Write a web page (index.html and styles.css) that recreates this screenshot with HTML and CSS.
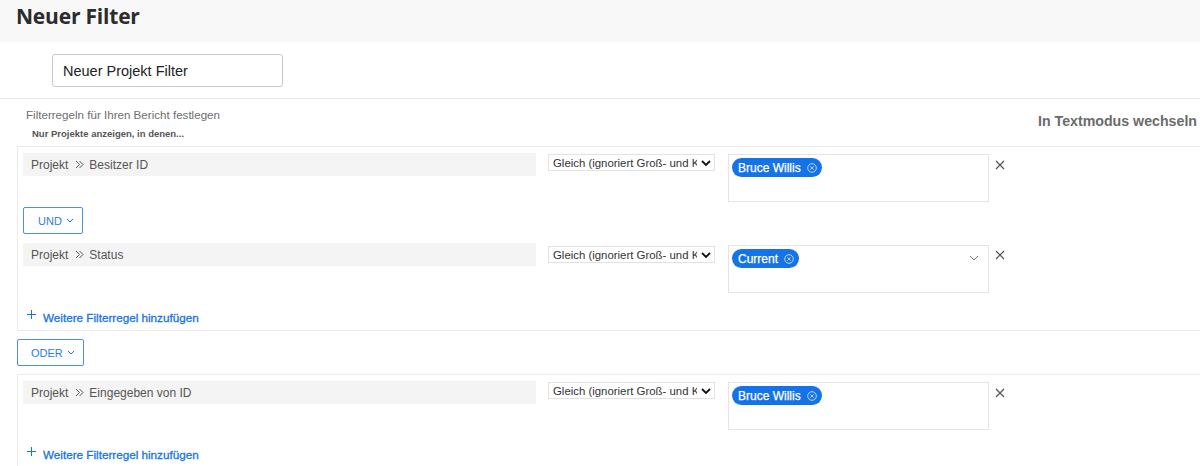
FILE: index.html
```html
<!DOCTYPE html>
<html lang="de">
<head>
<meta charset="utf-8">
<title>Neuer Filter</title>
<link rel="stylesheet" href="styles.css">
</head>
<body>
<header class="page-header">
  <h1 class="title">Neuer Filter</h1>
</header>
<div class="name-row">
  <div class="name-input">Neuer Projekt Filter</div>
</div>
<section class="rules">
  <div class="rules-head">
    <div class="rules-intro">
      <div class="rules-title">Filterregeln für Ihren Bericht festlegen</div>
      <div class="rules-sub">Nur Projekte anzeigen, in denen...</div>
    </div>
    <div class="text-mode">In Textmodus wechseln</div>
  </div>

  <div class="group">
    <div class="rule">
      <div class="field">Projekt<svg class="sep" viewBox="0 0 9 9" width="9" height="9"><path d="M1 1l3.5 3.5L1 8M4.5 1L8 4.5 4.5 8" fill="none" stroke="#555" stroke-width="1"/></svg>Besitzer ID</div>
      <div class="op"><span class="op-text">Gleich (ignoriert Groß- und Kleinschreibung)</span><svg class="op-chev" viewBox="0 0 10 6" width="10" height="6"><path d="M1 1l4 4 4-4" fill="none" stroke="#111" stroke-width="1.8"/></svg></div>
      <div class="value"><span class="chip">Bruce Willis<svg class="chip-x" viewBox="0 0 10 10" width="10" height="10"><circle cx="5" cy="5" r="4.3" fill="none" stroke="#cfe2fb" stroke-width="0.9"/><path d="M3.4 3.4l3.2 3.2M6.6 3.4l-3.2 3.2" stroke="#cfe2fb" stroke-width="0.9"/></svg></span></div>
      <svg class="remove" viewBox="0 0 10 10" width="10" height="10"><path d="M1 1l8 8M9 1l-8 8" stroke="#555" stroke-width="1.2"/></svg>
    </div>
    <button class="logic logic-and">UND <svg viewBox="0 0 8 5" width="8" height="5"><path d="M1 1l3 3 3-3" fill="none" stroke="#1473e6" stroke-width="1"/></svg></button>
    <div class="rule rule-2">
      <div class="field">Projekt<svg class="sep" viewBox="0 0 9 9" width="9" height="9"><path d="M1 1l3.5 3.5L1 8M4.5 1L8 4.5 4.5 8" fill="none" stroke="#555" stroke-width="1"/></svg>Status</div>
      <div class="op op-2"><span class="op-text">Gleich (ignoriert Groß- und Kleinschreibung)</span><svg class="op-chev" viewBox="0 0 10 6" width="10" height="6"><path d="M1 1l4 4 4-4" fill="none" stroke="#111" stroke-width="1.8"/></svg></div>
      <div class="value value-2"><span class="chip">Current<svg class="chip-x" viewBox="0 0 10 10" width="10" height="10"><circle cx="5" cy="5" r="4.3" fill="none" stroke="#cfe2fb" stroke-width="0.9"/><path d="M3.4 3.4l3.2 3.2M6.6 3.4l-3.2 3.2" stroke="#cfe2fb" stroke-width="0.9"/></svg></span><svg class="value-chev" viewBox="0 0 10 6" width="10" height="6"><path d="M1 1l4 4 4-4" fill="none" stroke="#777" stroke-width="1"/></svg></div>
      <svg class="remove" viewBox="0 0 10 10" width="10" height="10"><path d="M1 1l8 8M9 1l-8 8" stroke="#555" stroke-width="1.2"/></svg>
    </div>
    <a class="add-rule"><svg viewBox="0 0 9 9" width="9" height="9"><path d="M4.5 0v9M0 4.5h9" stroke="#1473e6" stroke-width="1"/></svg>Weitere Filterregel hinzufügen</a>
  </div>

  <button class="logic logic-or">ODER <svg viewBox="0 0 8 5" width="8" height="5"><path d="M1 1l3 3 3-3" fill="none" stroke="#1473e6" stroke-width="1"/></svg></button>

  <div class="group group-2">
    <div class="rule">
      <div class="field">Projekt<svg class="sep" viewBox="0 0 9 9" width="9" height="9"><path d="M1 1l3.5 3.5L1 8M4.5 1L8 4.5 4.5 8" fill="none" stroke="#555" stroke-width="1"/></svg>Eingegeben von ID</div>
      <div class="op"><span class="op-text">Gleich (ignoriert Groß- und Kleinschreibung)</span><svg class="op-chev" viewBox="0 0 10 6" width="10" height="6"><path d="M1 1l4 4 4-4" fill="none" stroke="#111" stroke-width="1.8"/></svg></div>
      <div class="value"><span class="chip">Bruce Willis<svg class="chip-x" viewBox="0 0 10 10" width="10" height="10"><circle cx="5" cy="5" r="4.3" fill="none" stroke="#cfe2fb" stroke-width="0.9"/><path d="M3.4 3.4l3.2 3.2M6.6 3.4l-3.2 3.2" stroke="#cfe2fb" stroke-width="0.9"/></svg></span></div>
      <svg class="remove" viewBox="0 0 10 10" width="10" height="10"><path d="M1 1l8 8M9 1l-8 8" stroke="#555" stroke-width="1.2"/></svg>
    </div>
    <a class="add-rule"><svg viewBox="0 0 9 9" width="9" height="9"><path d="M4.5 0v9M0 4.5h9" stroke="#1473e6" stroke-width="1"/></svg>Weitere Filterregel hinzufügen</a>
  </div>
</section>
</body>
</html>
```
FILE: styles.css
```css
* { box-sizing: border-box; }
html, body { margin: 0; padding: 0; background: #fff; }
body {
  font-family: "Liberation Sans", Arial, sans-serif;
  color: #333;
  overflow: hidden;
  width: 1200px;
  height: 466px;
}
.page-header {
  height: 42px;
  background: #f8f8f8;
  padding-left: 16px;
  display: flex;
  align-items: center;
}
.title {
  margin: 0;
  font-family: "Open Sans", "Noto Sans", sans-serif;
  font-size: 21px;
  font-weight: 700;
  color: #2c2c2c;
  letter-spacing: -0.2px;
  line-height: 1;
  margin-top: -10px;
}
.name-row {
  padding: 12px 0 11px 52px;
  border-bottom: 1px solid #e8e8e8;
}
.name-input {
  width: 231px;
  height: 33px;
  border: 1px solid #c8c8c8;
  border-radius: 3px;
  padding-left: 10px;
  font-size: 14.5px;
  color: #222;
  display: flex;
  align-items: center;
}
.rules-head {
  display: flex;
  justify-content: space-between;
  align-items: flex-start;
  height: 47px;
}
.rules-intro { padding-left: 26px; padding-top: 9px; }
.rules-title {
  font-size: 11.6px;
  color: #6e6e6e;
  line-height: 14px;
}
.rules-sub {
  font-size: 9.5px;
  font-weight: 700;
  color: #555;
  margin-top: 6px;
  padding-left: 6px;
  line-height: 12px;
}
.text-mode {
  font-size: 14.2px;
  font-weight: 700;
  color: #6b6b6b;
  padding-top: 14px;
  padding-right: 3px;
}
.group {
  margin-left: 17px;
  border: 1px solid #ececec;
  border-right: none;
  padding: 6px 0 3px 5px;
}
.rule {
  display: flex;
  align-items: flex-start;
}
.field {
  width: 513px;
  height: 23px;
  background: #f4f4f4;
  padding-left: 8px;
  font-size: 12px;
  color: #555;
  display: flex;
  align-items: center;
}
.sep { margin: 0 5px 0 7px; }
.op {
  margin-left: 12px;
  margin-top: 1px;
  width: 167px;
  height: 17px;
  border: 1px solid #e2e2e2;
  display: flex;
  align-items: center;
  padding: 0 3px 0 4px;
  font-size: 11.4px;
  color: #333;
  background: #fff;
}
.op-2 { margin-top: 3px; }
.op-text {
  flex: 1;
  overflow: hidden;
  white-space: nowrap;
  margin-right: 4px;
}
.value {
  margin-left: 13px;
  margin-top: 1px;
  width: 261px;
  height: 48px;
  border: 1px solid #e4e4e4;
  padding: 3px 0 0 3px;
  display: flex;
  align-items: flex-start;
  position: relative;
}
.value-2 { margin-top: 2px; }
.value-chev { position: absolute; right: 9px; top: 9px; }
.chip {
  height: 19px;
  background: #1473e6;
  color: #fff;
  border-radius: 10px;
  font-size: 12px;
  font-weight: 400;
  -webkit-text-stroke: 0.25px #fff;
  padding: 0 5px 0 6px;
  display: inline-flex;
  align-items: center;
  gap: 6px;
}
.remove { margin-left: 6px; margin-top: 7px; }
.logic {
  font-family: "Liberation Sans", Arial, sans-serif;
  background: #fff;
  border: 1px solid #4a90e8;
  border-radius: 2px;
  color: #2f7be6;
  font-size: 11px;
  display: flex;
  align-items: center;
  gap: 4px;
  padding: 0 0 0 14px;
  height: 27px;
}
.logic-and { width: 60px; margin-top: 5px; margin-bottom: 9px; }
.logic-or { width: 67px; margin: 8px 0 8px 17px; padding-left: 13px; height: 27px; }
.add-rule {
  display: flex;
  align-items: center;
  gap: 7px;
  padding-left: 4px;
  margin-top: 14px;
  font-size: 11.7px;
  font-weight: 400;
  -webkit-text-stroke: 0.3px #1473e6;
  color: #1473e6;
  height: 20px;
}
.add-rule svg { margin-top: -6px; }
.group-2 { border-bottom: none; }
.group-2 .add-rule { margin-top: 14px; }
```
